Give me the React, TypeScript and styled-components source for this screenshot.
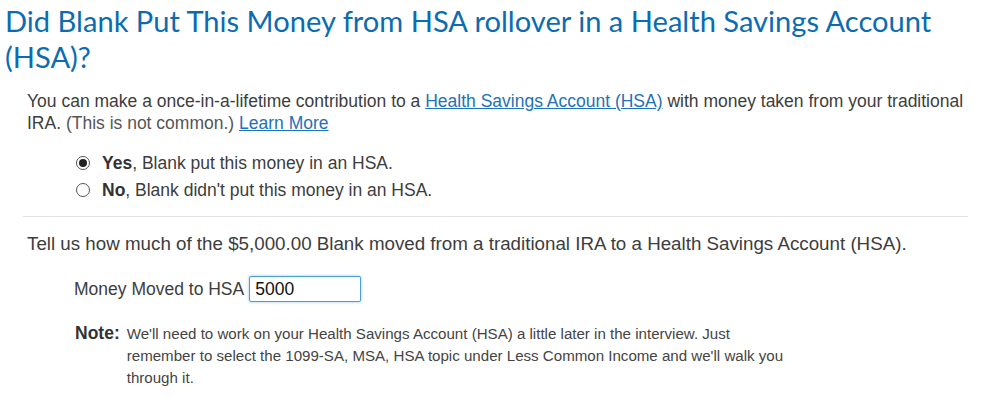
import React from "react";
import styled, { createGlobalStyle } from "styled-components";

const Global = createGlobalStyle`
  html, body { margin: 0; padding: 0; background: #fff; }
  body { font-family: "Liberation Sans", Arial, sans-serif; color: #3d3d3d; }
`;

const Page = styled.div`
  width: 983px;
  padding: 3px 0 0 5px;
  box-sizing: border-box;
`;

const Title = styled.h1`
  margin: 0;
  font-family: Lato, "Open Sans", sans-serif;
  font-weight: 400;
  font-size: 29.1px;
  line-height: 36px;
  color: #0b6cb1;
`;

const Section = styled.div`
  padding: 0 15px 0 22px;
`;

const Intro = styled.p`
  margin: 15px 0 0 0;
  font-size: 17.5px;
  line-height: 22px;
  color: #3d3d3d;
`;

const Muted = styled.span`
  color: #555;
`;

const Link = styled.a`
  color: #1e72b8;
  text-decoration: underline;
`;

const RadioGroup = styled.div`
  display: flex;
  flex-direction: column;
  gap: 5px;
  margin: 18px 0 0 49px;
`;

const RadioRow = styled.label`
  display: flex;
  align-items: center;
  gap: 12px;
  font-size: 17.5px;
  line-height: 22px;
  color: #3d3d3d;
`;

const RadioCircle = styled.span<{ $checked?: boolean }>`
  width: 12px;
  height: 12px;
  border: 1px solid #555;
  border-radius: 50%;
  display: inline-flex;
  align-items: center;
  justify-content: center;
  background: #fff;
  &::after {
    content: "";
    width: 8px;
    height: 8px;
    border-radius: 50%;
    background: ${(p) => (p.$checked ? "#222" : "transparent")};
  }
`;

const Bold = styled.b`
  font-weight: 700;
  color: #333;
`;

const Divider = styled.hr`
  border: none;
  border-top: 1px solid #e3e3e3;
  margin: 15px 0 0 -4px;
`;

const Question = styled.p`
  margin: 16px 0 0 0;
  font-size: 18.75px;
  line-height: 22px;
  color: #3d3d3d;
`;

const FieldRow = styled.div`
  display: flex;
  align-items: center;
  gap: 5px;
  margin: 21px 0 0 47px;
  font-size: 17.5px;
  color: #3d3d3d;
`;

const Input = styled.input`
  width: 112px;
  height: 26px;
  box-sizing: border-box;
  border: 1px solid #4a9fd8;
  border-radius: 2px;
  box-shadow: 0 0 3px rgba(74, 159, 216, 0.6);
  font-family: "Liberation Sans", Arial, sans-serif;
  font-size: 17.5px;
  padding: 2px 5px;
  color: #111;
  outline: none;
`;

const Note = styled.div`
  display: flex;
  align-items: baseline;
  gap: 7px;
  margin: 20px 0 0 48px;
`;

const NoteLabel = styled.span`
  font-weight: 700;
  font-size: 17.5px;
  line-height: 22px;
  color: #333;
`;

const NoteText = styled.p`
  margin: 0;
  width: 660px;
  font-size: 15.1px;
  line-height: 22px;
  color: #444;
`;

export default function App() {
  return (
    <Page>
      <Global />
      <Title>
        Did Blank Put This Money from HSA rollover in a Health Savings Account (HSA)?
      </Title>
      <Section>
        <Intro>
          You can make a once-in-a-lifetime contribution to a{" "}
          <Link href="#">Health Savings Account (HSA)</Link> with money taken from your
          traditional IRA. <Muted>(This is not common.)</Muted> <Link href="#">Learn More</Link>
        </Intro>
        <RadioGroup>
          <RadioRow>
            <RadioCircle $checked />
            <span>
              <Bold>Yes</Bold>, Blank put this money in an HSA.
            </span>
          </RadioRow>
          <RadioRow>
            <RadioCircle />
            <span>
              <Bold>No</Bold>, Blank didn't put this money in an HSA.
            </span>
          </RadioRow>
        </RadioGroup>
        <Divider />
        <Question>
          Tell us how much of the $5,000.00 Blank moved from a traditional IRA to a Health
          Savings Account (HSA).
        </Question>
        <FieldRow>
          <span>Money Moved to HSA</span>
          <Input defaultValue="5000" />
        </FieldRow>
        <Note>
          <NoteLabel>Note:</NoteLabel>
          <NoteText>
            We'll need to work on your Health Savings Account (HSA) a little later in the
            interview. Just remember to select the 1099-SA, MSA, HSA topic under Less Common
            Income and we'll walk you through it.
          </NoteText>
        </Note>
      </Section>
    </Page>
  );
}
